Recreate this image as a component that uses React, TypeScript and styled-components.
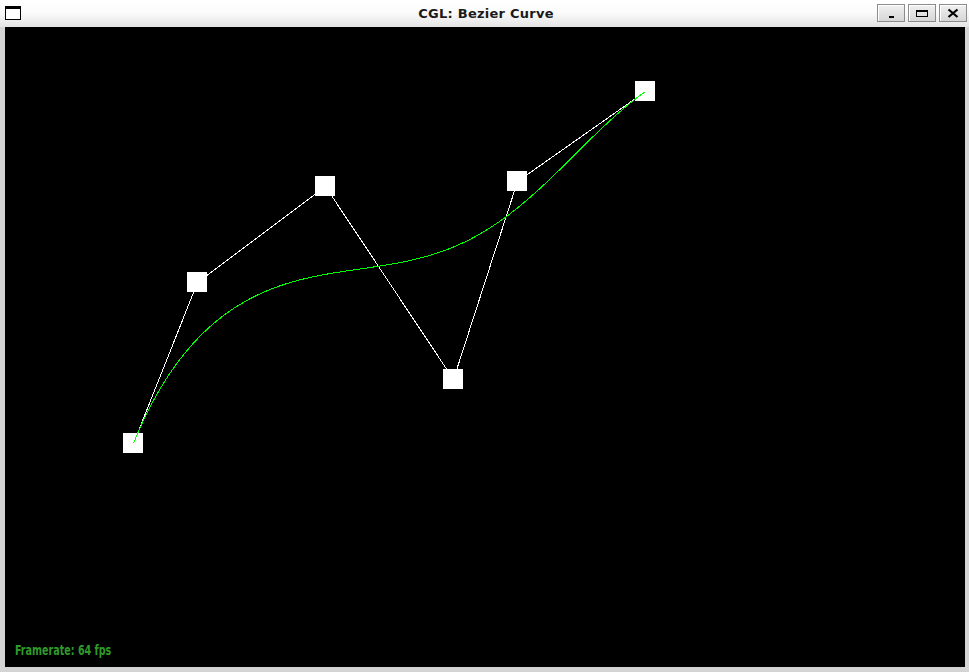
import React from "react";
import styled, { createGlobalStyle } from "styled-components";

const Global = createGlobalStyle`
  html, body { margin: 0; padding: 0; background: #d4d4d4; overflow: hidden; }
  #root { width: 969px; height: 672px; }
`;

const Window = styled.div`
  width: 969px;
  height: 672px;
  display: flex;
  flex-direction: column;
  background: #d4d4d4;
`;

const TitleBar = styled.div`
  height: 27px;
  flex: none;
  display: flex;
  align-items: center;
  padding: 0 2px 0 5px;
  box-sizing: border-box;
  background: linear-gradient(#ffffff 0%, #fbfbfb 45%, #e4e4e4 100%);
`;

const AppIcon = styled.div`
  width: 16px;
  height: 14px;
  box-sizing: border-box;
  border: 1px solid #000;
  border-top-width: 3px;
  background: #fff;
  margin-bottom: 2px;
`;

const Title = styled.div`
  flex: 1;
  text-align: center;
  font-family: "DejaVu Sans", sans-serif;
  font-weight: bold;
  font-size: 13px;
  letter-spacing: 0.25px;
  color: #1a1a1a;
  padding-left: 74px;
  margin-bottom: 1px;
`;

const Buttons = styled.div`
  display: flex;
  gap: 3px;
  margin-bottom: 1px;
`;

const WinButton = styled.div`
  width: 28px;
  height: 18px;
  box-sizing: border-box;
  border: 1px solid #8c8c8c;
  background: linear-gradient(#f0f0f0, #d6d6d6);
  box-shadow: inset 1px 1px 0 #ffffff;
  display: flex;
  align-items: center;
  justify-content: center;
`;

const Body = styled.div`
  flex: 1;
  padding: 0 4px 5px 5px;
  display: flex;
`;

const Canvas = styled.div`
  position: relative;
  width: 960px;
  height: 640px;
  background: #000;
`;

const Framerate = styled.div`
  position: absolute;
  left: 10px;
  top: 615px;
  font-family: "DejaVu Sans Condensed", "DejaVu Sans", sans-serif;
  font-weight: bold;
  font-size: 14px;
  line-height: 16px;
  color: #2f9a2a;
  white-space: nowrap;
  transform: scaleX(0.76);
  transform-origin: left top;
`;

type Pt = [number, number];
const points: Pt[] = [
  [128, 416],
  [192, 255],
  [320, 159],
  [448, 352],
  [512, 154],
  [640, 64],
];

function bezier(pts: Pt[], t: number): Pt {
  let p = pts.map((q) => [q[0], q[1]] as Pt);
  while (p.length > 1) {
    const n: Pt[] = [];
    for (let i = 0; i < p.length - 1; i++) {
      n.push([p[i][0] + (p[i + 1][0] - p[i][0]) * t, p[i][1] + (p[i + 1][1] - p[i][1]) * t]);
    }
    p = n;
  }
  return p[0];
}

const curve: string = Array.from({ length: 201 }, (_, i) => bezier(points, i / 200))
  .map((p) => `${p[0] + 0.5},${p[1] + 0.5}`)
  .join(" ");

const polygon = points.map((p) => `${p[0] + 0.5},${p[1] + 0.5}`).join(" ");

export default function App() {
  return (
    <>
      <Global />
      <Window>
        <TitleBar>
          <AppIcon />
          <Title>CGL: Bezier Curve</Title>
          <Buttons>
            <WinButton>
              <svg width="14" height="12" viewBox="0 0 14 12">
                <rect x="5" y="9" width="5" height="2" fill="#000" />
              </svg>
            </WinButton>
            <WinButton>
              <svg width="14" height="12" viewBox="0 0 14 12">
                <rect x="1.5" y="3.5" width="11" height="6" fill="none" stroke="#000" strokeWidth="1" />
                <rect x="1" y="3" width="12" height="2" fill="#000" />
              </svg>
            </WinButton>
            <WinButton>
              <svg width="14" height="12" viewBox="0 0 14 12">
                <path d="M2.5 2.5 L11.5 10 M11.5 2.5 L2.5 10" stroke="#000" strokeWidth="2.2" />
              </svg>
            </WinButton>
          </Buttons>
        </TitleBar>
        <Body>
          <Canvas>
            <svg width="960" height="640" viewBox="0 0 960 640" shapeRendering="crispEdges">
              {points.map((p, i) => (
                <rect key={i} x={p[0] - 10} y={p[1] - 10} width="20" height="20" fill="#fff" />
              ))}
              <polyline points={polygon} fill="none" stroke="#fff" strokeWidth="1" />
              <polyline points={curve} fill="none" stroke="#00ff00" strokeWidth="1" />
            </svg>
            <Framerate>Framerate: 64 fps</Framerate>
          </Canvas>
        </Body>
      </Window>
    </>
  );
}
